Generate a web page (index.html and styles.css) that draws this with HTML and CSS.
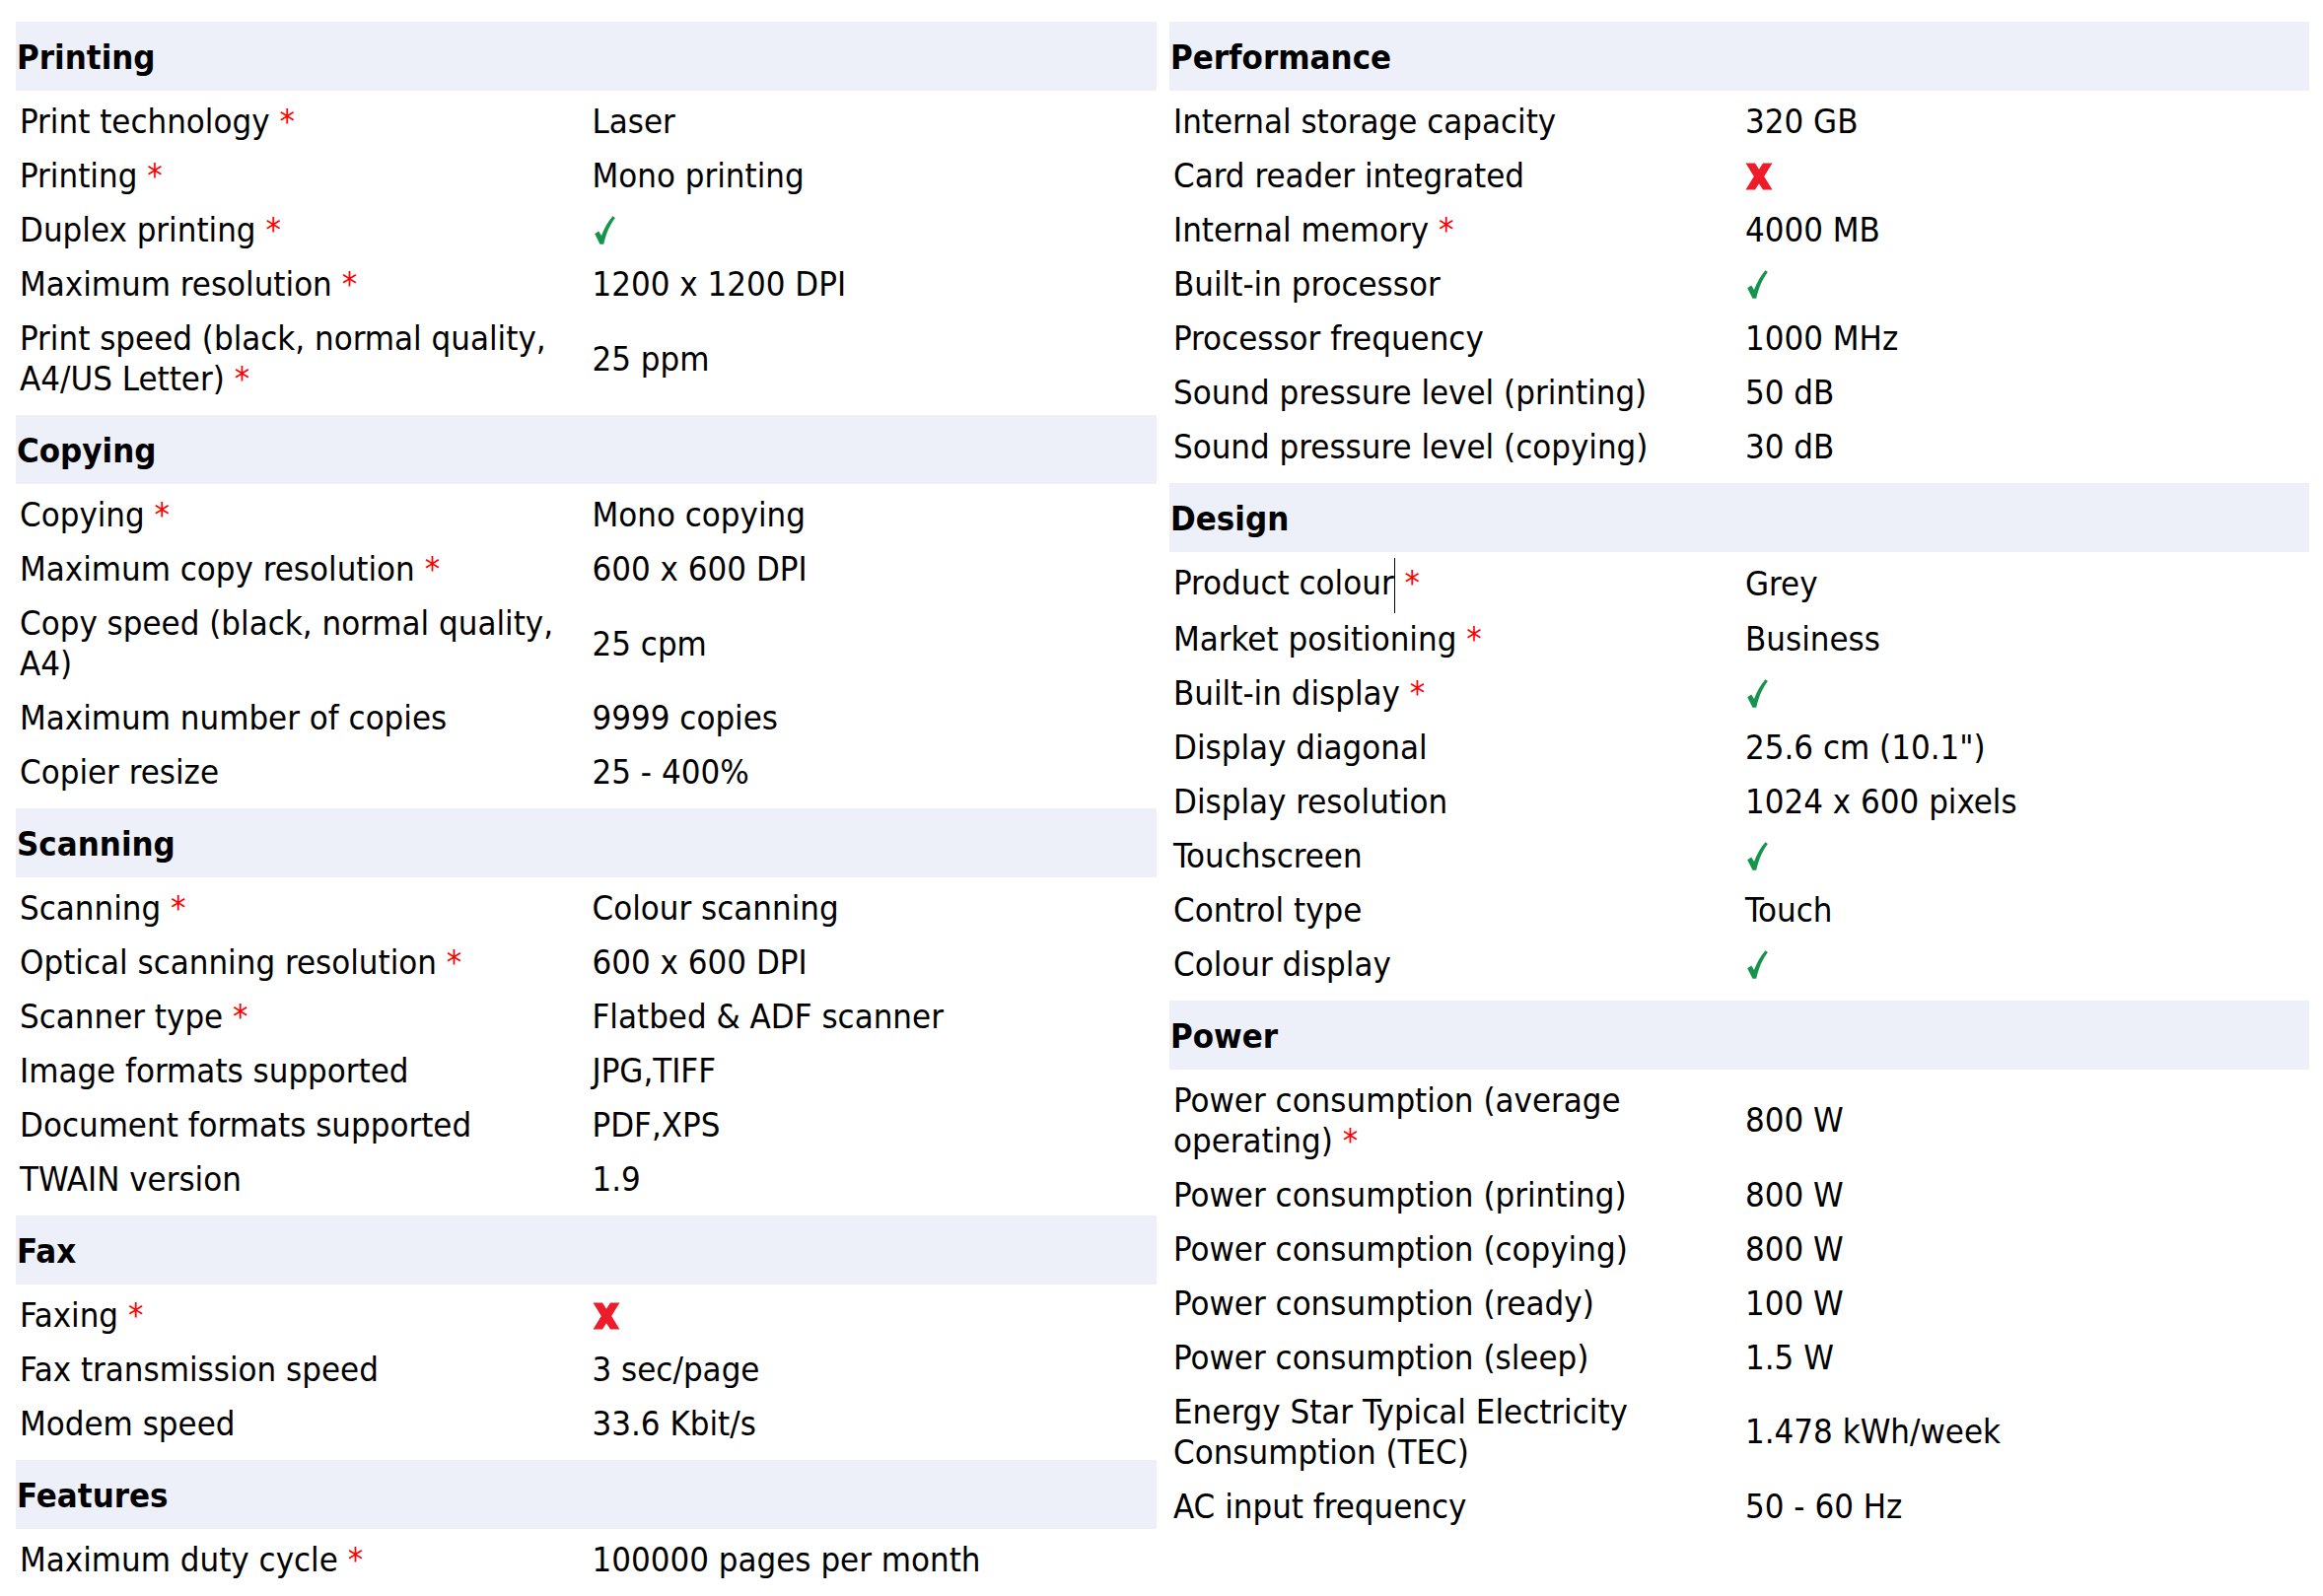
FILE: index.html
```html
<!DOCTYPE html>
<html lang="en">
<head>
<meta charset="utf-8">
<title>Specifications</title>
<link rel="stylesheet" href="styles.css">
</head>
<body>
<div class="page">
  <div class="col">
    <section class="sec">
      <h2 class="head">Printing</h2>
      <div class="row"><div class="lab">Print technology <span class="req">*</span></div><div class="val">Laser</div></div>
      <div class="row"><div class="lab">Printing <span class="req">*</span></div><div class="val">Mono printing</div></div>
      <div class="row"><div class="lab">Duplex printing <span class="req">*</span></div><div class="val"><svg class="yes" viewBox="0 0 21 29"><path d="M0.2 18.2 L4.2 15.4 L7 20 C9.8 12.2 13.8 5.4 18.4 0.2 L20.9 2 C16 8.4 12 17 9.2 28.8 L5.5 28.8 Z"/></svg></div></div>
      <div class="row"><div class="lab">Maximum resolution <span class="req">*</span></div><div class="val">1200 x 1200 DPI</div></div>
      <div class="row"><div class="lab">Print speed (black, normal quality, <span class="nw">A4/US Letter) <span class="req">*</span></span></div><div class="val">25 ppm</div></div>
    </section>
    <section class="sec">
      <h2 class="head">Copying</h2>
      <div class="row"><div class="lab">Copying <span class="req">*</span></div><div class="val">Mono copying</div></div>
      <div class="row"><div class="lab">Maximum copy resolution <span class="req">*</span></div><div class="val">600 x 600 DPI</div></div>
      <div class="row"><div class="lab">Copy speed (black, normal quality, A4)</div><div class="val">25 cpm</div></div>
      <div class="row"><div class="lab">Maximum number of copies</div><div class="val">9999 copies</div></div>
      <div class="row"><div class="lab">Copier resize</div><div class="val">25 - 400%</div></div>
    </section>
    <section class="sec">
      <h2 class="head">Scanning</h2>
      <div class="row"><div class="lab">Scanning <span class="req">*</span></div><div class="val">Colour scanning</div></div>
      <div class="row"><div class="lab">Optical scanning resolution <span class="req">*</span></div><div class="val">600 x 600 DPI</div></div>
      <div class="row"><div class="lab">Scanner type <span class="req">*</span></div><div class="val">Flatbed &amp; ADF scanner</div></div>
      <div class="row"><div class="lab">Image formats supported</div><div class="val">JPG,TIFF</div></div>
      <div class="row"><div class="lab">Document formats supported</div><div class="val">PDF,XPS</div></div>
      <div class="row"><div class="lab">TWAIN version</div><div class="val">1.9</div></div>
    </section>
    <section class="sec">
      <h2 class="head">Fax</h2>
      <div class="row"><div class="lab">Faxing <span class="req">*</span></div><div class="val"><svg class="no" viewBox="0 0 28 28"><polygon points="0.5,0.5 10,0.5 14,6.8 18,0.5 27.5,0.5 19.2,14 27.5,27.5 18,27.5 14,21.2 10,27.5 0.5,27.5 8.8,14"/></svg></div></div>
      <div class="row"><div class="lab">Fax transmission speed</div><div class="val">3 sec/page</div></div>
      <div class="row"><div class="lab">Modem speed</div><div class="val">33.6 Kbit/s</div></div>
    </section>
    <section class="sec">
      <h2 class="head">Features</h2>
      <div class="row"><div class="lab">Maximum duty cycle <span class="req">*</span></div><div class="val">100000 pages per month</div></div>
    </section>
  </div>
  <div class="col">
    <section class="sec">
      <h2 class="head">Performance</h2>
      <div class="row"><div class="lab">Internal storage capacity</div><div class="val">320 GB</div></div>
      <div class="row"><div class="lab">Card reader integrated</div><div class="val"><svg class="no" viewBox="0 0 28 28"><polygon points="0.5,0.5 10,0.5 14,6.8 18,0.5 27.5,0.5 19.2,14 27.5,27.5 18,27.5 14,21.2 10,27.5 0.5,27.5 8.8,14"/></svg></div></div>
      <div class="row"><div class="lab">Internal memory <span class="req">*</span></div><div class="val">4000 MB</div></div>
      <div class="row"><div class="lab">Built-in processor</div><div class="val"><svg class="yes" viewBox="0 0 21 29"><path d="M0.2 18.2 L4.2 15.4 L7 20 C9.8 12.2 13.8 5.4 18.4 0.2 L20.9 2 C16 8.4 12 17 9.2 28.8 L5.5 28.8 Z"/></svg></div></div>
      <div class="row"><div class="lab">Processor frequency</div><div class="val">1000 MHz</div></div>
      <div class="row"><div class="lab">Sound pressure level (printing)</div><div class="val">50 dB</div></div>
      <div class="row"><div class="lab">Sound pressure level (copying)</div><div class="val">30 dB</div></div>
    </section>
    <section class="sec">
      <h2 class="head">Design</h2>
      <div class="row"><div class="lab">Product colour<span class="caret"></span> <span class="req">*</span></div><div class="val">Grey</div></div>
      <div class="row"><div class="lab">Market positioning <span class="req">*</span></div><div class="val">Business</div></div>
      <div class="row"><div class="lab">Built-in display <span class="req">*</span></div><div class="val"><svg class="yes" viewBox="0 0 21 29"><path d="M0.2 18.2 L4.2 15.4 L7 20 C9.8 12.2 13.8 5.4 18.4 0.2 L20.9 2 C16 8.4 12 17 9.2 28.8 L5.5 28.8 Z"/></svg></div></div>
      <div class="row"><div class="lab">Display diagonal</div><div class="val">25.6 cm (10.1")</div></div>
      <div class="row"><div class="lab">Display resolution</div><div class="val">1024 x 600 pixels</div></div>
      <div class="row"><div class="lab">Touchscreen</div><div class="val"><svg class="yes" viewBox="0 0 21 29"><path d="M0.2 18.2 L4.2 15.4 L7 20 C9.8 12.2 13.8 5.4 18.4 0.2 L20.9 2 C16 8.4 12 17 9.2 28.8 L5.5 28.8 Z"/></svg></div></div>
      <div class="row"><div class="lab">Control type</div><div class="val">Touch</div></div>
      <div class="row"><div class="lab">Colour display</div><div class="val"><svg class="yes" viewBox="0 0 21 29"><path d="M0.2 18.2 L4.2 15.4 L7 20 C9.8 12.2 13.8 5.4 18.4 0.2 L20.9 2 C16 8.4 12 17 9.2 28.8 L5.5 28.8 Z"/></svg></div></div>
    </section>
    <section class="sec">
      <h2 class="head">Power</h2>
      <div class="row"><div class="lab">Power consumption (average <span class="nw">operating) <span class="req">*</span></span></div><div class="val">800 W</div></div>
      <div class="row"><div class="lab">Power consumption (printing)</div><div class="val">800 W</div></div>
      <div class="row"><div class="lab">Power consumption (copying)</div><div class="val">800 W</div></div>
      <div class="row"><div class="lab">Power consumption (ready)</div><div class="val">100 W</div></div>
      <div class="row"><div class="lab">Power consumption (sleep)</div><div class="val">1.5 W</div></div>
      <div class="row"><div class="lab">Energy Star Typical Electricity Consumption (TEC)</div><div class="val">1.478 kWh/week</div></div>
      <div class="row"><div class="lab">AC input frequency</div><div class="val">50 - 60 Hz</div></div>
    </section>
  </div>
</div>
</body>
</html>
```
FILE: styles.css
```css
html, body {
  margin: 0;
  padding: 0;
  background: #ffffff;
}
body {
  font-family: "DejaVu Sans Condensed", "DejaVu Sans", "Liberation Sans", sans-serif;
  font-stretch: semi-condensed;
  font-size: 34.5px;
  line-height: 41px;
  color: #000000;
}
.page {
  display: grid;
  grid-template-columns: 1157px 1156px;
  column-gap: 13px;
  align-items: start;
  padding: 22px 14px 0 16px;
}
.col {
  display: flex;
  flex-direction: column;
}
.sec {
  margin: 0 0 10px 0;
}
.head {
  margin: 0 0 3px 0;
  height: 68px;
  line-height: 68px;
  padding: 2px 0 0 1px;
  font-size: 34.5px;
  font-weight: bold;
  background: #edf0f9;
}
.row {
  display: grid;
  grid-template-columns: 1fr 1fr;
  min-height: 55px;
}
.lab, .val {
  display: flex;
  align-items: center;
  padding: 8px 0 6px;
}
.lab {
  display: block;
  align-self: center;
  padding-left: 4px;
  padding-right: 8px;
}
.val {
  padding-left: 6px;
}
.nw {
  white-space: nowrap;
}
.req {
  color: #ff0000;
}
.yes {
  width: 21px;
  height: 29px;
  fill: #17944c;
  margin-left: 2px;
}
.no {
  width: 28px;
  height: 28px;
  fill: #ec1c2a;
}
.caret {
  display: inline-block;
  width: 1px;
  height: 56px;
  margin: -8px 0;
  background: #000000;
  vertical-align: middle;
}
```
